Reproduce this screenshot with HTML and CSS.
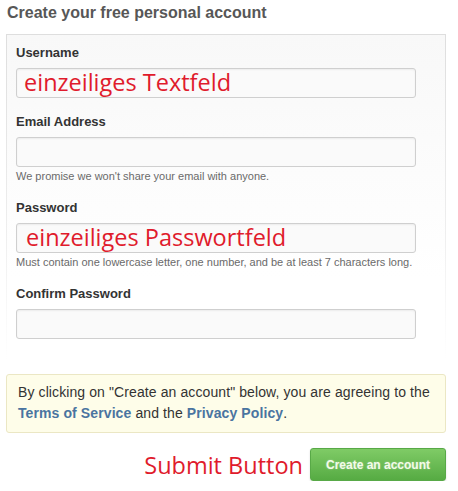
FILE: index.html
```html
<!DOCTYPE html>
<html>
<head>
<meta charset="utf-8">
<link rel="stylesheet" href="styles.css">
</head>
<body>
<div class="page">
  <h2 class="title">Create your free personal account</h2>
  <div class="panel">
    <div class="group">
      <div class="label">Username</div>
      <div class="field"><span class="annot">einzeiliges Textfeld</span></div>
    </div>
    <div class="group">
      <div class="label">Email Address</div>
      <div class="field"></div>
      <div class="note">We promise we won't share your email with anyone.</div>
    </div>
    <div class="group">
      <div class="label">Password</div>
      <div class="field"><span class="annot annot-pw">einzeiliges Passwortfeld</span></div>
      <div class="note">Must contain one lowercase letter, one number, and be at least 7 characters long.</div>
    </div>
    <div class="group">
      <div class="label">Confirm Password</div>
      <div class="field"></div>
    </div>
  </div>
  <div class="notice">
    By clicking on "Create an account" below, you are agreeing to the<br>
    <a class="link">Terms of Service</a> and the <a class="link">Privacy Policy</a>.
  </div>
  <div class="actions">
    <span class="submit-annot">Submit Button</span>
    <button class="btn">Create an account</button>
  </div>
</div>
</body>
</html>
```
FILE: styles.css
```css
html, body {
  margin: 0;
  padding: 0;
  background: #fff;
}
body {
  font-family: "Liberation Sans", Arial, sans-serif;
  color: #333;
}
.page {
  width: 440px;
  padding: 0 0 0 6px;
}
.title {
  margin: 0;
  padding: 3px 0 0 1px;
  height: 34px;
  box-sizing: border-box;
  font-size: 16px;
  line-height: 20px;
  font-weight: bold;
  color: #575757;
}
.panel {
  box-sizing: border-box;
  width: 440px;
  padding: 9px 9px 5px 9px;
  border: 1px solid transparent;
  border-bottom: 0;
  border-image: linear-gradient(to bottom, #dedede, #eeeeee 60%, rgba(255,255,255,0)) 1;
  background: linear-gradient(to bottom, #f8f8f8, #ffffff 75%);
}
.group {
  margin-bottom: 15px;
}
.label {
  font-size: 13px;
  line-height: 18px;
  font-weight: bold;
  color: #333;
  margin-bottom: 6px;
}
.field {
  box-sizing: border-box;
  width: 400px;
  height: 30px;
  border: 1px solid #cfcfcf;
  border-radius: 3px;
  background: #fafafa;
  box-shadow: inset 0 1px 2px rgba(0,0,0,0.06);
}
.annot {
  display: block;
  font-family: "Open Sans", "Noto Sans", sans-serif;
  font-size: 23.5px;
  line-height: 28px;
  color: #e01b2c;
  padding-left: 7px;
  margin-top: -1px;
}
.annot-pw {
  padding-left: 9px;
}
.note {
  font-size: 11px;
  line-height: 16px;
  margin-top: 1px;
  color: #6a6a6a;
}
.notice {
  box-sizing: border-box;
  width: 440px;
  margin-top: 15px;
  padding: 7px 10px 8px 11px;
  border: 1px solid #ebe7c4;
  border-radius: 3px;
  background: #fefde9;
  font-size: 14px;
  line-height: 21px;
  letter-spacing: 0.1px;
  color: #333;
}
.link {
  font-weight: bold;
  color: #4a74a0;
  text-decoration: none;
}
.actions {
  display: flex;
  justify-content: flex-end;
  align-items: center;
  gap: 7px;
  width: 440px;
  margin-top: 15px;
}
.submit-annot {
  font-family: "Open Sans", "Noto Sans", sans-serif;
  font-size: 23.5px;
  line-height: 30px;
  color: #e01b2c;
}
.btn {
  box-sizing: border-box;
  width: 136px;
  height: 33px;
  border: 1px solid #58a947;
  border-radius: 3px;
  background: linear-gradient(to bottom, #7fcb66, #56ab43);
  box-shadow: 0 1px 2px rgba(0,0,0,0.15);
  font-family: "Liberation Sans", Arial, sans-serif;
  font-size: 12px;
  font-weight: bold;
  color: #f3fbe9;
  text-shadow: 0 0 2px rgba(255,255,255,0.4);
  padding: 0;
}
```
